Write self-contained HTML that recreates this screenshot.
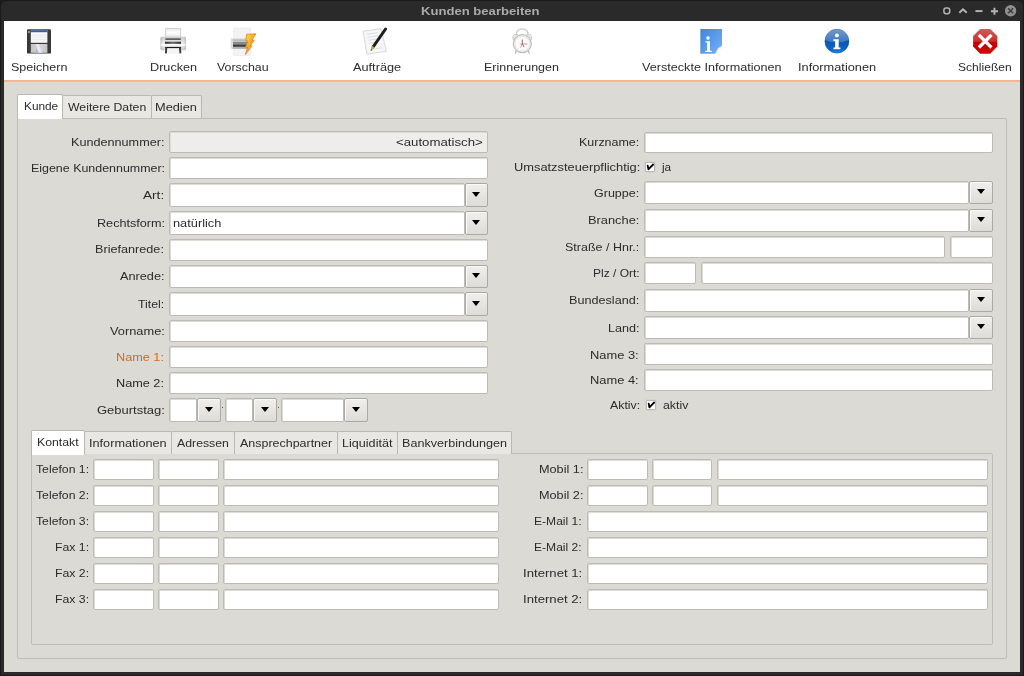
<!DOCTYPE html><html><head><meta charset="utf-8"><style>
*{margin:0;padding:0;box-sizing:border-box}
html,body{width:1024px;height:676px;overflow:hidden;background:#1c1c1c}
body>div,body>svg{position:absolute}
.frame{left:0;top:0;width:1024px;height:676px;background:#2a2a2a;border:1px solid #1a1a1a;border-radius:6px 6px 0 0}
.tbar{left:4px;top:21px;width:1016px;height:59px;background:#fff}
.client{left:4px;top:82px;width:1016px;height:590px;background:#dcdad5}
.pane{border:1px solid #bebcb7;border-radius:2px}
.tab{background:#e8e7e3;border:1px solid #bab8b3;border-bottom:none;border-radius:2px 2px 0 0}
.tab.sel{background:#fff;border-color:#b9b7b2}
.f{background:#fff;border:1px solid #bdbbb5;border-radius:2px;box-shadow:inset 1px 1px 0 #dddbd6}
.btn{background:linear-gradient(#f0efec,#dedcd8);border:1px solid #aba9a3;border-radius:2px;box-shadow:inset 1px 1px 0 #fafaf9}
.btn i{position:absolute;width:0;height:0;border-left:4px solid transparent;border-right:4px solid transparent;border-top:5px solid #000}
.cb{width:10px;height:10px;border:1px solid #b9b7b1;background:#fff;border-radius:1px;box-shadow:0 0 0 1px rgba(200,198,192,.35)}
.cb svg{position:absolute;left:0;top:0}
.t{position:absolute;will-change:transform;transform-origin:0 0;font:12px "Liberation Sans",sans-serif;line-height:14px;white-space:nowrap;color:#2c2c2c}
.t.o{color:#cd6d20}
.t.ti{font-weight:bold;color:#ababab}
</style></head><body><div class="frame"></div>
<div class="tbar"></div>
<div class="client"></div>
<div style="left:4px;top:80px;width:1016px;height:1px;background:#f6b38b"></div>
<div style="left:4px;top:81px;width:1016px;height:1px;background:#e9bba0"></div>
<div class="pane" style="left:17px;top:118px;width:990px;height:541px"></div>
<div class="tab" style="left:62px;top:95px;width:90px;height:23px"></div>
<div class="tab" style="left:151px;top:95px;width:51px;height:23px"></div>
<div class="tab sel" style="left:17px;top:94px;width:46px;height:25px"></div>
<div class="f" style="left:169px;top:131px;width:319px;height:22px;background:#ededeb"></div>
<div class="f" style="left:169px;top:157px;width:319px;height:22px;background:#fff"></div>
<div class="f" style="left:169px;top:183px;width:296px;height:24px"></div>
<div class="btn" style="left:465px;top:183px;width:23px;height:24px"><i style="left:6px;top:8px"></i></div>
<div class="f" style="left:169px;top:211px;width:296px;height:24px"></div>
<div class="btn" style="left:465px;top:211px;width:23px;height:24px"><i style="left:6px;top:8px"></i></div>
<div class="f" style="left:169px;top:239px;width:319px;height:22px;background:#fff"></div>
<div class="f" style="left:169px;top:265px;width:296px;height:23px"></div>
<div class="btn" style="left:465px;top:265px;width:23px;height:23px"><i style="left:6px;top:7px"></i></div>
<div class="f" style="left:169px;top:292px;width:296px;height:24px"></div>
<div class="btn" style="left:465px;top:292px;width:23px;height:24px"><i style="left:6px;top:8px"></i></div>
<div class="f" style="left:169px;top:320px;width:319px;height:22px;background:#fff"></div>
<div class="f" style="left:169px;top:346px;width:319px;height:22px;background:#fff"></div>
<div class="f" style="left:169px;top:372px;width:319px;height:22px;background:#fff"></div>
<div class="f" style="left:169px;top:398px;width:28px;height:24px"></div>
<div class="btn" style="left:197px;top:398px;width:24px;height:24px"><i style="left:7px;top:8px"></i></div>
<div class="f" style="left:225px;top:398px;width:28px;height:24px"></div>
<div class="btn" style="left:253px;top:398px;width:24px;height:24px"><i style="left:7px;top:8px"></i></div>
<div class="f" style="left:281px;top:398px;width:63px;height:24px"></div>
<div class="btn" style="left:344px;top:398px;width:24px;height:24px"><i style="left:7px;top:8px"></i></div>
<div style="left:222px;top:407px;width:1px;height:1px;background:#555"></div>
<div style="left:278px;top:407px;width:1px;height:1px;background:#555"></div>
<div class="f" style="left:644px;top:132px;width:349px;height:21px;background:#fff"></div>
<div class="cb" style="left:645px;top:162px"><svg width="10" height="10" viewBox="0 0 10 10"><path d="M1.7 2.6 L2.4 6.3 L7.1 1.5" stroke="#000" stroke-width="1.8" fill="none" stroke-linecap="round" stroke-linejoin="round"/></svg></div>
<div class="f" style="left:644px;top:181px;width:325px;height:23px"></div>
<div class="btn" style="left:969px;top:181px;width:24px;height:23px"><i style="left:7px;top:7px"></i></div>
<div class="f" style="left:644px;top:209px;width:325px;height:23px"></div>
<div class="btn" style="left:969px;top:209px;width:24px;height:23px"><i style="left:7px;top:7px"></i></div>
<div class="f" style="left:644px;top:236px;width:301px;height:22px;background:#fff"></div>
<div class="f" style="left:950px;top:236px;width:43px;height:22px;background:#fff"></div>
<div class="f" style="left:644px;top:262px;width:52px;height:22px;background:#fff"></div>
<div class="f" style="left:701px;top:262px;width:292px;height:22px;background:#fff"></div>
<div class="f" style="left:644px;top:289px;width:325px;height:23px"></div>
<div class="btn" style="left:969px;top:289px;width:24px;height:23px"><i style="left:7px;top:7px"></i></div>
<div class="f" style="left:644px;top:316px;width:325px;height:23px"></div>
<div class="btn" style="left:969px;top:316px;width:24px;height:23px"><i style="left:7px;top:7px"></i></div>
<div class="f" style="left:644px;top:343px;width:349px;height:22px;background:#fff"></div>
<div class="f" style="left:644px;top:369px;width:349px;height:22px;background:#fff"></div>
<div class="cb" style="left:646px;top:400px"><svg width="10" height="10" viewBox="0 0 10 10"><path d="M1.7 2.6 L2.4 6.3 L7.1 1.5" stroke="#000" stroke-width="1.8" fill="none" stroke-linecap="round" stroke-linejoin="round"/></svg></div>
<div class="pane" style="left:31px;top:453px;width:962px;height:192px"></div>
<div class="tab" style="left:84px;top:431px;width:88px;height:23px"></div>
<div class="tab" style="left:171px;top:431px;width:64px;height:23px"></div>
<div class="tab" style="left:234px;top:431px;width:104px;height:23px"></div>
<div class="tab" style="left:337px;top:431px;width:61px;height:23px"></div>
<div class="tab" style="left:397px;top:431px;width:115px;height:23px"></div>
<div class="tab sel" style="left:31px;top:430px;width:54px;height:25px"></div>
<div class="f" style="left:93px;top:459px;width:61px;height:21px;background:#fff"></div>
<div class="f" style="left:158px;top:459px;width:61px;height:21px;background:#fff"></div>
<div class="f" style="left:223px;top:459px;width:276px;height:21px;background:#fff"></div>
<div class="f" style="left:587px;top:459px;width:61px;height:21px;background:#fff"></div>
<div class="f" style="left:652px;top:459px;width:60px;height:21px;background:#fff"></div>
<div class="f" style="left:717px;top:459px;width:271px;height:21px;background:#fff"></div>
<div class="f" style="left:93px;top:485px;width:61px;height:21px;background:#fff"></div>
<div class="f" style="left:158px;top:485px;width:61px;height:21px;background:#fff"></div>
<div class="f" style="left:223px;top:485px;width:276px;height:21px;background:#fff"></div>
<div class="f" style="left:587px;top:485px;width:61px;height:21px;background:#fff"></div>
<div class="f" style="left:652px;top:485px;width:60px;height:21px;background:#fff"></div>
<div class="f" style="left:717px;top:485px;width:271px;height:21px;background:#fff"></div>
<div class="f" style="left:93px;top:511px;width:61px;height:21px;background:#fff"></div>
<div class="f" style="left:158px;top:511px;width:61px;height:21px;background:#fff"></div>
<div class="f" style="left:223px;top:511px;width:276px;height:21px;background:#fff"></div>
<div class="f" style="left:587px;top:511px;width:401px;height:21px;background:#fff"></div>
<div class="f" style="left:93px;top:537px;width:61px;height:21px;background:#fff"></div>
<div class="f" style="left:158px;top:537px;width:61px;height:21px;background:#fff"></div>
<div class="f" style="left:223px;top:537px;width:276px;height:21px;background:#fff"></div>
<div class="f" style="left:587px;top:537px;width:401px;height:21px;background:#fff"></div>
<div class="f" style="left:93px;top:563px;width:61px;height:21px;background:#fff"></div>
<div class="f" style="left:158px;top:563px;width:61px;height:21px;background:#fff"></div>
<div class="f" style="left:223px;top:563px;width:276px;height:21px;background:#fff"></div>
<div class="f" style="left:587px;top:563px;width:401px;height:21px;background:#fff"></div>
<div class="f" style="left:93px;top:589px;width:61px;height:21px;background:#fff"></div>
<div class="f" style="left:158px;top:589px;width:61px;height:21px;background:#fff"></div>
<div class="f" style="left:223px;top:589px;width:276px;height:21px;background:#fff"></div>
<div class="f" style="left:587px;top:589px;width:401px;height:21px;background:#fff"></div>
<div class="t ti" style="left:420.9px;top:3.8px;font-size:11.5px;transform:scaleX(1.1379)">Kunden bearbeiten</div>
<div class="t" style="left:10.6px;top:60.0px;font-size:11.5px;transform:scaleX(1.0900)">Speichern</div>
<div class="t" style="left:149.8px;top:60.0px;font-size:11.5px;transform:scaleX(1.1000)">Drucken</div>
<div class="t" style="left:217.2px;top:60.0px;font-size:11.5px;transform:scaleX(1.0766)">Vorschau</div>
<div class="t" style="left:352.9px;top:60.0px;font-size:11.5px;transform:scaleX(1.1070)">Aufträge</div>
<div class="t" style="left:484.2px;top:60.0px;font-size:11.5px;transform:scaleX(1.0853)">Erinnerungen</div>
<div class="t" style="left:642.2px;top:60.0px;font-size:11.5px;transform:scaleX(1.0976)">Versteckte Informationen</div>
<div class="t" style="left:797.8px;top:60.0px;font-size:11.5px;transform:scaleX(1.1116)">Informationen</div>
<div class="t" style="left:957.7px;top:60.0px;font-size:11.5px;transform:scaleX(1.0500)">Schließen</div>
<div class="t" style="left:23.6px;top:98.8px;font-size:11.5px;transform:scaleX(1.0281)">Kunde</div>
<div class="t" style="left:68.2px;top:99.9px;font-size:11.5px;transform:scaleX(1.0671)">Weitere Daten</div>
<div class="t" style="left:155.4px;top:99.9px;font-size:11.5px;transform:scaleX(1.1111)">Medien</div>
<div class="t" style="left:71.2px;top:135.1px;font-size:11.5px;transform:scaleX(1.0988)">Kundennummer:</div>
<div class="t" style="left:30.6px;top:161.2px;font-size:11.5px;transform:scaleX(1.0803)">Eigene Kundennummer:</div>
<div class="t" style="left:143.4px;top:187.6px;font-size:11.5px;transform:scaleX(1.1824)">Art:</div>
<div class="t" style="left:96.5px;top:215.5px;font-size:11.5px;transform:scaleX(1.0983)">Rechtsform:</div>
<div class="t" style="left:95.3px;top:242.3px;font-size:11.5px;transform:scaleX(1.1000)">Briefanrede:</div>
<div class="t" style="left:120.4px;top:269.3px;font-size:11.5px;transform:scaleX(1.1051)">Anrede:</div>
<div class="t" style="left:137.9px;top:297.4px;font-size:11.5px;transform:scaleX(1.0667)">Titel:</div>
<div class="t" style="left:110.0px;top:324.0px;font-size:11.5px;transform:scaleX(1.1146)">Vorname:</div>
<div class="t o" style="left:116.1px;top:349.9px;font-size:11.5px;transform:scaleX(1.1024)">Name 1:</div>
<div class="t" style="left:116.1px;top:375.9px;font-size:11.5px;transform:scaleX(1.1024)">Name 2:</div>
<div class="t" style="left:96.9px;top:402.9px;font-size:11.5px;transform:scaleX(1.1293)">Geburtstag:</div>
<div class="t" style="left:578.9px;top:135.1px;font-size:11.5px;transform:scaleX(1.0833)">Kurzname:</div>
<div class="t" style="left:513.5px;top:159.9px;font-size:11.5px;transform:scaleX(1.1162)">Umsatzsteuerpflichtig:</div>
<div class="t" style="left:593.9px;top:185.7px;font-size:11.5px;transform:scaleX(1.0875)">Gruppe:</div>
<div class="t" style="left:588.3px;top:212.8px;font-size:11.5px;transform:scaleX(1.1159)">Branche:</div>
<div class="t" style="left:564.6px;top:240.0px;font-size:11.5px;transform:scaleX(1.0866)">Straße / Hnr.:</div>
<div class="t" style="left:592.6px;top:266.0px;font-size:11.5px;transform:scaleX(1.0442)">Plz / Ort:</div>
<div class="t" style="left:569.3px;top:293.0px;font-size:11.5px;transform:scaleX(1.0984)">Bundesland:</div>
<div class="t" style="left:607.8px;top:320.9px;font-size:11.5px;transform:scaleX(1.0963)">Land:</div>
<div class="t" style="left:590.4px;top:347.5px;font-size:11.5px;transform:scaleX(1.1190)">Name 3:</div>
<div class="t" style="left:590.4px;top:373.3px;font-size:11.5px;transform:scaleX(1.1190)">Name 4:</div>
<div class="t" style="left:609.5px;top:397.5px;font-size:11.5px;transform:scaleX(1.0741)">Aktiv:</div>
<div class="t" style="left:396.0px;top:134.8px;font-size:11.5px;transform:scaleX(1.1507)">&lt;automatisch&gt;</div>
<div class="t" style="left:172.5px;top:215.5px;font-size:11.5px;transform:scaleX(1.1119)">natürlich</div>
<div class="t" style="left:662.1px;top:160.0px;font-size:11.5px;transform:scaleX(1.0222)">ja</div>
<div class="t" style="left:662.5px;top:397.5px;font-size:11.5px;transform:scaleX(1.0708)">aktiv</div>
<div class="t" style="left:37.3px;top:434.9px;font-size:11.5px;transform:scaleX(1.0684)">Kontakt</div>
<div class="t" style="left:89.2px;top:436.0px;font-size:11.5px;transform:scaleX(1.1043)">Informationen</div>
<div class="t" style="left:177.4px;top:436.0px;font-size:11.5px;transform:scaleX(1.0687)">Adressen</div>
<div class="t" style="left:239.9px;top:436.0px;font-size:11.5px;transform:scaleX(1.0835)">Ansprechpartner</div>
<div class="t" style="left:341.6px;top:436.0px;font-size:11.5px;transform:scaleX(1.0956)">Liquidität</div>
<div class="t" style="left:402.2px;top:436.0px;font-size:11.5px;transform:scaleX(1.0936)">Bankverbindungen</div>
<div class="t" style="left:36.3px;top:462.1px;font-size:11.5px;transform:scaleX(1.0633)">Telefon 1:</div>
<div class="t" style="left:36.3px;top:488.1px;font-size:11.5px;transform:scaleX(1.0633)">Telefon 2:</div>
<div class="t" style="left:36.3px;top:514.1px;font-size:11.5px;transform:scaleX(1.0633)">Telefon 3:</div>
<div class="t" style="left:55.3px;top:540.1px;font-size:11.5px;transform:scaleX(1.0667)">Fax 1:</div>
<div class="t" style="left:55.3px;top:566.1px;font-size:11.5px;transform:scaleX(1.0667)">Fax 2:</div>
<div class="t" style="left:55.3px;top:592.1px;font-size:11.5px;transform:scaleX(1.0667)">Fax 3:</div>
<div class="t" style="left:538.6px;top:462.1px;font-size:11.5px;transform:scaleX(1.1026)">Mobil 1:</div>
<div class="t" style="left:538.6px;top:488.1px;font-size:11.5px;transform:scaleX(1.1026)">Mobil 2:</div>
<div class="t" style="left:534.4px;top:514.1px;font-size:11.5px;transform:scaleX(1.0500)">E-Mail 1:</div>
<div class="t" style="left:534.4px;top:540.1px;font-size:11.5px;transform:scaleX(1.0500)">E-Mail 2:</div>
<div class="t" style="left:523.3px;top:566.1px;font-size:11.5px;transform:scaleX(1.1440)">Internet 1:</div>
<div class="t" style="left:523.3px;top:592.1px;font-size:11.5px;transform:scaleX(1.1440)">Internet 2:</div>
<svg style="left:0;top:0" width="1024" height="80" viewBox="0 0 1024 80">
<defs>
<linearGradient id="gPaper" x1="0" y1="0" x2="0" y2="1"><stop offset="0" stop-color="#fdfdfd"/><stop offset="1" stop-color="#d6d6d6"/></linearGradient>
<linearGradient id="gBody" x1="0" y1="0" x2="0" y2="1"><stop offset="0" stop-color="#d0d0d0"/><stop offset="0.45" stop-color="#f4f4f4"/><stop offset="1" stop-color="#bdbdbd"/></linearGradient>
<linearGradient id="gBolt" x1="0" y1="0" x2="1" y2="1"><stop offset="0" stop-color="#ffe14a"/><stop offset="0.5" stop-color="#f9a51c"/><stop offset="1" stop-color="#ffe36a"/></linearGradient>
<linearGradient id="gBlueSq" x1="0" y1="0" x2="1" y2="1"><stop offset="0" stop-color="#3f86de"/><stop offset="1" stop-color="#77b0f8"/></linearGradient>
<linearGradient id="gInfo" x1="0" y1="0" x2="0" y2="1"><stop offset="0" stop-color="#6a9ad2"/><stop offset="0.48" stop-color="#3a78c0"/><stop offset="0.52" stop-color="#0b5bb8"/><stop offset="1" stop-color="#1a7be0"/></linearGradient>
<linearGradient id="gStop" x1="0" y1="0" x2="0" y2="1"><stop offset="0" stop-color="#d45a5a"/><stop offset="0.5" stop-color="#c93030"/><stop offset="0.55" stop-color="#c80000"/><stop offset="1" stop-color="#d80000"/></linearGradient>
<linearGradient id="gShut" x1="0" y1="0" x2="1" y2="0"><stop offset="0" stop-color="#c4c4c4"/><stop offset="0.5" stop-color="#d8d8dc"/><stop offset="1" stop-color="#c4c4c4"/></linearGradient>
<linearGradient id="gPaper2" x1="0" y1="0" x2="0" y2="1"><stop offset="0" stop-color="#e6e6e6"/><stop offset="0.35" stop-color="#ffffff"/><stop offset="1" stop-color="#dadada"/></linearGradient>
<linearGradient id="gBody2" x1="0" y1="0" x2="0" y2="1"><stop offset="0" stop-color="#c8c8c8"/><stop offset="0.4" stop-color="#e8e8e8"/><stop offset="0.6" stop-color="#f0f0f0"/><stop offset="1" stop-color="#c6c6c6"/></linearGradient>
<linearGradient id="gBodyH" x1="0" y1="0" x2="1" y2="0"><stop offset="0" stop-color="#808080" stop-opacity="0.45"/><stop offset="0.15" stop-color="#fff" stop-opacity="0"/><stop offset="0.85" stop-color="#fff" stop-opacity="0"/><stop offset="1" stop-color="#808080" stop-opacity="0.45"/></linearGradient>
<linearGradient id="gSlot" x1="0" y1="0" x2="1" y2="0"><stop offset="0" stop-color="#2e2e2e"/><stop offset="0.5" stop-color="#6a6a6a"/><stop offset="1" stop-color="#2e2e2e"/></linearGradient>
<linearGradient id="gInfoB" x1="0" y1="0" x2="0" y2="1"><stop offset="0" stop-color="#1556a8"/><stop offset="0.5" stop-color="#0a55b0"/><stop offset="0.85" stop-color="#0e66cc"/><stop offset="1" stop-color="#2b8ae8"/></linearGradient>
<linearGradient id="gGloss" x1="0" y1="0" x2="0" y2="1"><stop offset="0" stop-color="#ffffff" stop-opacity="0.45"/><stop offset="1" stop-color="#ffffff" stop-opacity="0.2"/></linearGradient>
<clipPath id="cInfo"><circle cx="836.9" cy="41.2" r="12"/></clipPath>
</defs>
<!-- Floppy -->
<g>
<rect x="27" y="29.3" width="24" height="24.3" rx="1.2" fill="#393939"/>
<rect x="30.8" y="30.2" width="16.6" height="12.6" fill="#f6f6f8"/>
<rect x="30.8" y="30.2" width="16.6" height="2" fill="#2f5f9c"/>
<path d="M31.5 35.2h15M31.5 37.4h15M31.5 39.6h15" stroke="#e2e2ea" stroke-width="0.6"/>
<rect x="30.8" y="44" width="16.6" height="8.8" fill="url(#gShut)"/>
<path d="M36 44 L38.5 44 L42 52.8 L38.5 52.8 Z" fill="#e8e8f2"/>
<path d="M36 48 L38.5 52.8 L36 52.8Z" fill="#a8b4c8"/>
<rect x="28.2" y="31" width="1.5" height="2.2" fill="#aaa"/>
</g>
<!-- Printer -->
<g>
<rect x="165.6" y="28.4" width="15" height="11" rx="0.8" fill="url(#gPaper2)" stroke="#bdbdbd" stroke-width="0.7"/>
<rect x="160.5" y="36.8" width="25.4" height="13.4" rx="1.5" fill="url(#gBody2)"/>
<rect x="160.5" y="36.8" width="25.4" height="13.4" rx="1.5" fill="url(#gBodyH)"/>
<path d="M165.4 39.1h15.4" stroke="#2a2a2a" stroke-width="1.2"/>
<rect x="165" y="41.7" width="16" height="2.1" fill="url(#gSlot)"/>
<rect x="161" y="44.1" width="24.4" height="1.6" fill="#fbfbfb"/>
<path d="M165.1 47.6h16" stroke="#1c1c1c" stroke-width="1.3"/>
<path d="M166.3 47.6 L165.9 53.4 M179.9 47.6 L180.4 53.4" stroke="#3a3a3a" stroke-width="1.9"/>
<rect x="167.4" y="48.3" width="11.6" height="5.4" fill="#f4f4f4"/>
</g>
<!-- Vorschau -->
<g>
<rect x="233.8" y="28" width="16.8" height="27.3" fill="#f3f3f3" stroke="#e6e6e6" stroke-width="0.6"/>
<rect x="230.7" y="38.2" width="19" height="10.8" rx="1" fill="#dcdcdc"/>
<rect x="233" y="39.3" width="15" height="2.5" fill="#bdbdbd"/>
<rect x="233" y="42" width="15" height="2.2" fill="#8a8a8a"/>
<rect x="233" y="44.4" width="15" height="2.4" fill="#3b3b3b"/>
<rect x="233" y="47" width="15" height="1.8" fill="#b0b0b0"/>
<path d="M246.6 34.2 L256 33.8 L252 40 L254.2 40.4 L250.3 45.4 L252.2 45.8 L245.4 54.6 L247.6 47.2 L245.6 46.8 L247.8 41.2 L245.8 40.8 Z" fill="url(#gBolt)" stroke="#e0761a" stroke-width="0.7" stroke-linejoin="round"/>
</g>
<!-- Auftraege -->
<g>
<path d="M363 31.3 L381 28.6 L386.3 51.2 L367 54.3 Z" fill="#f7f7f7" stroke="#c9c9c9" stroke-width="0.7"/>
<path d="M367 34.3l11 -1.7M367.7 37.3l11 -1.7M368.4 40.3l11 -1.7M369.1 43.3l7 -1.1M370.5 49.5l12 -1.8" stroke="#cfd3dc" stroke-width="0.7"/>
<path d="M385.6 29 L373.3 46.7" stroke="#1e1e1e" stroke-width="3" stroke-linecap="round"/>
<path d="M371.7 45.5 L375 47.8 L370.6 51 Z" fill="#c9a13a"/>
<path d="M370.6 51 L371.4 49.2 L372.3 49.9 Z" fill="#333"/>
</g>
<!-- Clock -->
<g fill="#ececec" stroke="#c3c3c3" stroke-width="0.9">
<path d="M516.5 35 Q516 29 522.2 29 Q528.4 29 528 35" fill="none" stroke="#cfcfcf" stroke-width="1.6"/>
<path d="M513.5 40 Q511.5 36 515 34.5 Q518 33.8 518.5 36Z"/>
<path d="M531 40 Q533 36 529.5 34.5 Q526.5 33.8 526 36Z"/>
<path d="M516.5 50.5 L515 53.6 M528 50.5 L529.5 53.6" stroke="#bcbcbc" stroke-width="1.3"/>
<circle cx="522.3" cy="43.7" r="9" fill="#f1f1f1" stroke="#bdbdbd" stroke-width="1.2"/>
<circle cx="522.3" cy="43.7" r="7.3" fill="#fafafa" stroke="#dedede" stroke-width="0.6"/>
<path d="M522.3 43.7 V39.5 M522.3 43.7 L524 47" stroke="#555" stroke-width="0.8" fill="none"/>
<path d="M520.5 44 H527.5 M522.3 43.7 L520.4 47.5" stroke="#e04848" stroke-width="0.6" fill="none"/>
</g>
<!-- Hidden info -->
<g>
<path d="M700.7 28.9 H722 V45.8 Q719.5 50 715 53.7 H700.7 Z" fill="url(#gBlueSq)"/>
<path d="M700.7 28.9 V53.7" stroke="#2f6fc4" stroke-width="0.8" opacity="0.6"/>
<path d="M722 45.8 Q720.5 48.5 717.2 49.2 Q716.4 51.5 715 53.7 Q719.5 50 722 45.8 Z" fill="#f2f2f2"/>
<path d="M722 45.8 Q718.5 47.2 717.6 48.8 Q717 52 715 53.7 L718 53.7 L722 49 Z" fill="#fafafa" opacity="0.9"/>
<path d="M722 45.8 Q718.6 47.4 717.6 49 Q716.8 52 715 53.7" fill="none" stroke="#b9b9b9" stroke-width="0.6"/>
<circle cx="708" cy="38" r="1.7" fill="#fff"/>
<path d="M705.4 41.3 H710 V50.8 H711.8 V52 H705.3 V50.8 H707.1 V42.6 H705.4 Z" fill="#fff"/>
</g>
<!-- Info -->
<g>
<circle cx="836.9" cy="41.2" r="12.1" fill="url(#gInfoB)"/>
<circle cx="836.9" cy="41.2" r="11.9" fill="none" stroke="#0c4c9c" stroke-width="0.5" opacity="0.7"/>
<ellipse cx="836.9" cy="34.5" rx="16" ry="8" fill="url(#gGloss)" clip-path="url(#cInfo)"/>
<circle cx="836.9" cy="35.4" r="1.95" fill="#fff"/>
<path d="M833.4 39.2 H838.7 V47.4 H840.4 V49.3 H833.4 V47.4 H835.1 V41.1 H833.4 Z" fill="#fff"/>
</g>
<!-- Stop -->
<g>
<path d="M980.2 28.9 H990.2 L997.3 36 V46.6 L990.2 53.7 H980.2 L973.1 46.6 V36 Z" fill="url(#gStop)"/>
<path d="M980.1 36.1 L990.3 46.3 M990.3 36.1 L980.1 46.3" stroke="#fff" stroke-width="3.3" stroke-linecap="square"/>
</g>
</svg>
<svg style="left:930px;top:0" width="94" height="21" viewBox="930 0 94 21">
<rect x="943.9" y="8" width="5.8" height="5.8" rx="2.2" fill="none" stroke="#b4b4b4" stroke-width="1.5"/>
<path d="M959.3 12.8 L963 9.3 L966.7 12.8" fill="none" stroke="#b4b4b4" stroke-width="1.9"/>
<path d="M975.4 11.1 H982.5" stroke="#b4b4b4" stroke-width="1.9"/>
<path d="M990.9 11.3 H998 M994.45 7.8 V14.8" stroke="#b4b4b4" stroke-width="1.9"/>
<circle cx="1010.6" cy="10.8" r="5.7" fill="#8f8f8f"/>
<path d="M1008.1 8.3 L1013.1 13.3 M1013.1 8.3 L1008.1 13.3" stroke="#3a3a3a" stroke-width="1.5"/>
</svg>
</body></html>
